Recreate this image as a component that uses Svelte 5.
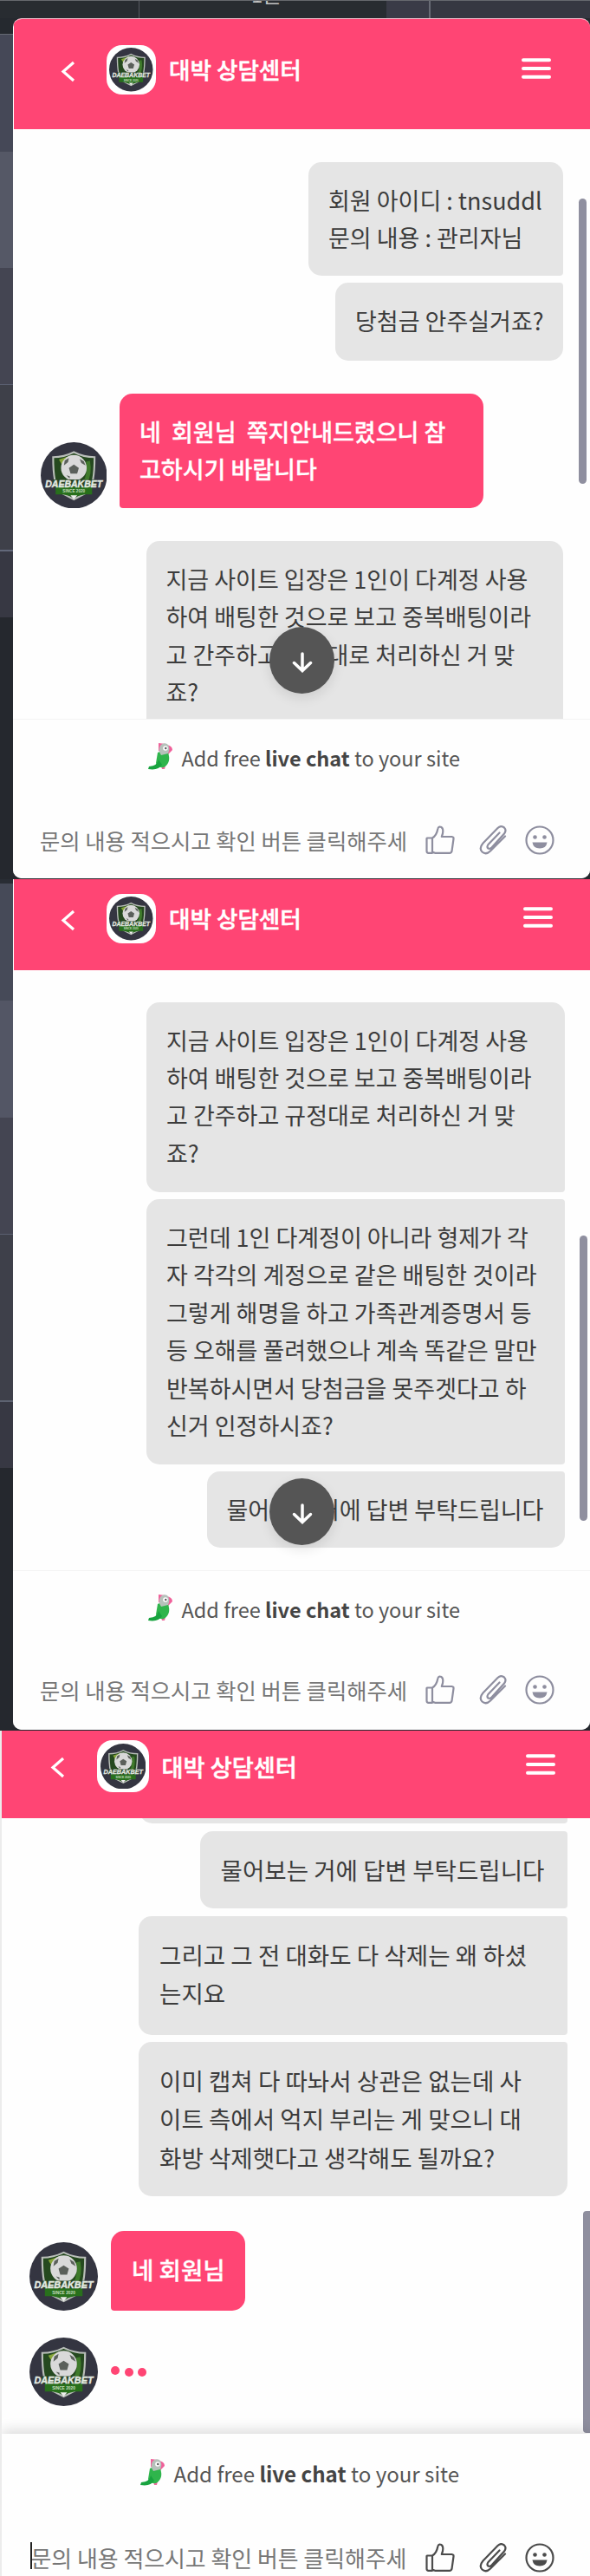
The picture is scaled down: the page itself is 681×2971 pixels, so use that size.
<script>
  const title = '대박 상담센터';
  const placeholder = '문의 내용 적으시고 확인 버튼 클릭해주세';

  const longQuestion =
    '지금 사이트 입장은 1인이 다계정 사용\n하여 배팅한 것으로 보고 중복배팅이라\n고 간주하고 규정대로 처리하신 거 맞\n죠?';

  // gap is the space above a message, h the height of its bubble
  const panels = [
    {
      name: 'first',
      scrollButton: true,
      messages: [
        { text: '회원 아이디 : tnsuddl\n문의 내용 : 관리자님', w: 294, h: 131, gap: 38.5, place: 'start' },
        { text: '당첨금 안주실거죠?', w: 263, h: 89.5, gap: 8, place: 'end' },
        { agent: true, text: '네  회원님  쪽지안내드렸으니 참\n고하시기 바랍니다', w: 420, h: 132, gap: 38.5 },
        { text: longQuestion, w: 481.5, h: 219, gap: 38, place: 'start' },
      ],
    },
    {
      name: 'second',
      scrollButton: true,
      messages: [
        { text: longQuestion, w: 482.5, h: 219.5, gap: 37, place: 'start' },
        {
          text: '그런데 1인 다계정이 아니라 형제가 각\n자 각각의 계정으로 같은 배팅한 것이라\n그렇게 해명을 하고 가족관계증명서 등\n등 오해를 풀려했으나 계속 똑같은 말만\n반복하시면서 당첨금을 못주겟다고 하\n신거 인정하시죠?',
          w: 482.5,
          h: 306,
          gap: 8,
          place: 'middle',
        },
        { text: '물어보는 거에 답변 부탁드립니다', w: 413, h: 87.5, gap: 8, place: 'end' },
      ],
    },
    {
      name: 'third',
      focused: true,
      messages: [
        { text: '', w: 494, h: 60, gap: -54, place: 'middle' },
        { text: '물어보는 거에 답변 부탁드립니다', w: 424, h: 89.5, gap: 8.5, place: 'middle' },
        { text: '그리고 그 전 대화도 다 삭제는 왜 하셨\n는지요', w: 494.5, h: 137, gap: 8.5, place: 'middle' },
        {
          text: '이미 캡쳐 다 따놔서 상관은 없는데 사\n이트 측에서 억지 부리는 게 맞으니 대\n화방 삭제햇다고 생각해도 될까요?',
          w: 494.5,
          h: 178,
          gap: 8.5,
          place: 'end',
        },
        { agent: true, text: '네 회원님', w: 155, h: 92.5, gap: 39.5 },
        { agent: true, typing: true, h: 79, gap: 31 },
      ],
    },
  ];
</script>

{#snippet logo()}
  <svg class="logo" viewBox="0 0 80 80">
    <circle cx="40" cy="40" r="40" fill="#343541" />
    <path d="M15 18q13 0 25-6q12 6 25 6q0 34-8 42l-17 9l-17-9q-8-8-8-42z" fill="#25491f" stroke="#b9beb9" stroke-width="2.2" />
    <path d="M22 21l15-5-9 15z" fill="#86a638" />
    <path d="M57 23q3 15-4 27" stroke="#3f7a2b" stroke-width="5" fill="none" />
    <circle cx="40" cy="31" r="15.5" fill="#d9d9d9" />
    <path d="M40 27l6 4-2 7h-8l-2-7zM29 22l5-3-1 5-5 4zM52 23l-5-3 2 5 5 3zM31 40l4 1v3z" fill="#5b605b" />
    <path d="M14 45h52v9h-52z" fill="#2a4526" />
    <path d="M18 54h44v9h-9l-13 3-13-3h-9z" fill="#28701c" />
    <path d="M36 64h8l-4 5z" fill="#eee" />
    <text x="40" y="54" text-anchor="middle" textLength="69" lengthAdjust="spacingAndGlyphs" class="logo-name">DAEBAKBET</text>
    <text x="40" y="61" text-anchor="middle" textLength="27" lengthAdjust="spacingAndGlyphs" class="logo-sub">SINCE 2020</text>
  </svg>
{/snippet}

<div class="page">
  {#each panels as panel}
    <section class="shot {panel.name}">
      {#if panel.name === 'first'}
        <div class="backdrop"><span>1은</span></div>
      {/if}
      <div class="chat">
        <header>
          <svg class="back" viewBox="0 0 17 25"><path d="M15 2L3 12.5L15 23" /></svg>
          <div class="brand">{@render logo()}</div>
          <h1>{title}</h1>
          <svg class="menu" viewBox="0 0 34 24"><path d="M2 2.2h30M2 12h30M2 21.8h30" /></svg>
        </header>

        <div class="messages">
          {#each panel.messages as m}
            <div class="row" class:agent={m.agent} style="margin-top: {m.gap}px; height: {m.h}px">
              {#if m.agent}
                <div class="avatar">{@render logo()}</div>
              {/if}
              {#if m.typing}
                <div class="typing"><i></i><i></i><i></i></div>
              {:else}
                <div class="bubble {m.place ?? ''}" style="width: {m.w}px">{m.text}</div>
              {/if}
            </div>
          {/each}
          <div class="thumb"></div>
          {#if panel.scrollButton}
            <div class="scroll-down">
              <svg viewBox="0 0 24 24"><path d="M12 2v19M2.5 12.5L12 21.5L21.5 12.5" /></svg>
            </div>
          {/if}
        </div>

        <footer>
          <div class="promo">
            <svg class="parrot" viewBox="0 0 29 32">
              <path d="M12 1l8 1-3 10-5-2zM21 3q7 1 7 6l-5 5-3-4z" fill="#f0609a" />
              <path d="M15 27h5l-1 4h-3z" fill="#ef6a9f" />
              <path d="M11 12q4-3 12 0q4 12-5 17q-7 1-9-5z" fill="#2fb54c" />
              <path d="M12 20q-1 7-11 8l-1 3q12 2 16-5z" fill="#18a33f" />
              <path d="M14 4q3-4 8-2q4 4 1 11l-8 2q-4-5-1-11z" fill="#b5c1ba" />
              <circle cx="20" cy="7" r="2.8" fill="#fff" />
              <circle cx="20.3" cy="7" r="1.2" fill="#555" />
            </svg>
            <p>Add free <b>live chat</b> to your site</p>
          </div>
          <div class="entry">
            {#if panel.focused}<span class="caret"></span>{/if}
            <span class="hint">{placeholder}</span>
            <svg class="icon" viewBox="0 0 34 34">
              <path d="M2 14.5h6v17.3H3.6Q1.5 31.8 1.5 29.5V15zM8 14.5q5-3 6.3-10.5q.3-2 2-2.5q4 0 4 5q0 3-1.5 6.5h11.7q2.3.3 2 2.5l-2 14.3q-.5 2-2.5 2H11L8 30.5" />
            </svg>
            <svg class="icon clip" viewBox="0 0 34 34">
              <path d="M24.5 8.5L11.5 22q-2 3 0 4.5q2 1 4-1L30 9.5q3-4 0-7q-4-3-7.5.5L5.5 20.5q-5 6-1 10q4.5 4 9.5-1L31 12.5" />
            </svg>
            <svg class="icon smile" viewBox="0 0 34 34">
              <circle cx="17" cy="17" r="15.5" />
              <circle class="fill" cx="11.5" cy="13.5" r="2.3" />
              <circle class="fill" cx="22.5" cy="13.5" r="2.3" />
              <path class="fill" d="M8.5 19.5h17q-1 7-8.5 7t-8.5-7z" />
            </svg>
          </div>
        </footer>
      </div>
    </section>
  {/each}
</div>

<style>
  :global(body) {
    margin: 0;
  }

  .page {
    width: 681px;
    height: 2971px;
    overflow: hidden;
    font-family: 'Noto Sans CJK KR', 'Noto Sans', sans-serif;
    color: #3c3c3c;
    background: #25282e;
  }

  .shot {
    box-sizing: border-box;
    padding-left: 15px;
    overflow: hidden;
  }

  .first {
    height: 1014px;
    background: linear-gradient(
      #25292f 0 39px, #666a73 39px 40px, #454857 40px 175px, #555866 175px 309px,
      #444552 309px 443px, #5a5f70 443px 444px, #3e4049 444px 634px, #62687a 634px 636px,
      #373843 636px 712px, #25282e 712px
    );
  }

  .second {
    height: 982px;
    background: linear-gradient(
      #292d34 0 5px, #464a58 5px 140px, #535665 140px 275px, #444552 275px 409px,
      #5a5f70 409px 410px, #3e404a 410px 601px, #5d6271 601px 603px, #373843 603px 679px,
      #25282e 679px
    );
  }

  .third {
    height: 975px;
    padding-left: 2px;
    background: #ececec;
  }

  .backdrop {
    height: 21px;
    margin-left: -15px;
    box-sizing: border-box;
    border-top: 1px solid #66696e;
    overflow: hidden;
    background: linear-gradient(
      90deg, #282c31 0 160px, #565960 160px 161px, #282c31 161px 446px,
      #3a3b47 446px 495px, #686b75 495px 497px, #363842 497px
    );
  }

  .backdrop span {
    display: block;
    margin: -23px 0 0 290px;
    font-size: 24px;
    line-height: 30px;
    color: #c5c5c5;
  }

  .chat {
    display: flex;
    flex-direction: column;
    height: 100%;
    background: #fefefe;
    overflow: hidden;
  }

  .first .chat {
    height: 992px;
    border-radius: 10px;
    border-top: 1px solid #f7c3d0;
    box-sizing: border-box;
  }

  .second .chat {
    height: 981px;
    border-radius: 0 0 10px 10px;
  }

  header {
    display: flex;
    align-items: flex-start;
    flex: none;
    height: 104.5px;
    margin-left: 1px;
    box-sizing: border-box;
    background: #ff4574;
  }

  .first header {
    height: 126.5px;
    padding-top: 13px;
  }

  .third header {
    height: 101px;
    margin-left: 0;
  }

  .back {
    width: 17px;
    height: 25px;
    margin: 34.5px 0 0 53.5px;
    fill: none;
    stroke: #fff;
    stroke-width: 3.2;
  }

  .brand {
    width: 57.5px;
    height: 57.5px;
    margin: 16.5px 0 0 36px;
    padding: 3.5px;
    box-sizing: border-box;
    border-radius: 18px;
    background: #fff;
  }

  .logo {
    display: block;
    width: 100%;
    height: 100%;
  }

  .logo-name {
    font: italic bold 11px 'Liberation Sans', sans-serif;
    fill: #e4ebe2;
    stroke: #e4ebe2;
    stroke-width: 0.4;
  }

  .logo-sub {
    font: bold 5px 'Liberation Sans', sans-serif;
    fill: #c7dfc0;
  }

  h1 {
    margin: 25px 0 0 15px;
    font-size: 26.6px;
    line-height: 40px;
    font-weight: 500;
    white-space: nowrap;
    color: #fff;
    -webkit-text-stroke: 0.5px #fff;
  }

  .menu {
    width: 34px;
    height: 24px;
    margin: 31.5px 43px 0 auto;
    fill: none;
    stroke: #fff;
    stroke-width: 4;
    stroke-linecap: round;
  }

  .first .menu {
    margin-right: 45px;
  }

  .third .back {
    margin: 29.5px 0 0 55.5px;
  }

  .third .brand {
    width: 59.5px;
    height: 59.5px;
    margin: 11px 0 0 37.5px;
  }

  .third h1 {
    margin-top: 21px;
    font-size: 27.2px;
  }

  .third .menu {
    margin: 27px 40.5px 0 auto;
  }

  .messages {
    position: relative;
    flex: 1;
    min-height: 0;
    padding: 0 29.5px 0 31.5px;
    overflow: hidden;
    display: flow-root;
  }

  .first .messages {
    padding-right: 31px;
  }

  .third .messages {
    padding: 0 26.5px 0 32px;
  }

  .row {
    display: flex;
    justify-content: flex-end;
    align-items: stretch;
  }

  .row.agent {
    justify-content: flex-start;
    align-items: flex-end;
    gap: 15px;
  }

  .bubble {
    box-sizing: border-box;
    padding: 22px 0 0 23px;
    font-size: 27px;
    line-height: 43.4px;
    white-space: pre;
    background: #e5e5e5;
    border-radius: 15px 4px 4px 15px;
  }

  .bubble.start {
    border-radius: 15px 15px 4px 15px;
  }

  .bubble.end {
    border-radius: 15px 4px 15px 15px;
  }

  .agent .bubble {
    height: 100%;
    color: #fff;
    font-weight: 500;
    -webkit-text-stroke: 0.3px #fff;
    background: #ff4574;
    border-radius: 15px 15px 15px 4px;
  }

  .third .bubble {
    padding-left: 24px;
    font-size: 27.6px;
    line-height: 44.4px;
  }

  .avatar {
    width: 76.5px;
    height: 76.5px;
  }

  .third .avatar {
    width: 79px;
    height: 79px;
  }

  .typing {
    display: flex;
    align-self: center;
    gap: 5.5px;
  }

  .typing i {
    width: 10px;
    height: 10px;
    border-radius: 50%;
    background: #ff4574;
  }

  .typing i:first-child {
    transform: translateY(-2px);
  }

  .thumb {
    position: absolute;
    right: 3px;
    top: 306px;
    width: 9px;
    height: 329px;
    border-radius: 5px;
    background: #8f8f9f;
  }

  .first .thumb {
    right: 4.5px;
    top: 80px;
    height: 329px;
  }

  .third .thumb {
    right: 0;
    top: 453px;
    width: 8px;
    height: 256px;
    border-radius: 4px 0 0 4px;
  }

  .scroll-down {
    position: absolute;
    left: 296px;
    bottom: 29px;
    display: grid;
    place-items: center;
    width: 75px;
    height: 77px;
    border-radius: 50%;
    background: #555;
    box-shadow: 0 5px 14px rgba(0, 0, 0, 0.1);
  }

  .scroll-down svg {
    width: 24px;
    height: 24px;
    margin-top: 5px;
    fill: none;
    stroke: #fff;
    stroke-width: 3.5;
    stroke-linecap: round;
  }

  footer {
    position: relative;
    flex: none;
    height: 184px;
    box-sizing: border-box;
    border-top: 1px solid #f3f3f3;
    background: #fefefe;
  }

  .third footer {
    height: 164px;
    box-shadow: 0 -4px 14px rgba(0, 0, 0, 0.14);
    border-top: 0;
  }

  .promo {
    display: flex;
    align-items: flex-start;
    padding: 26px 0 0 156px;
    height: 70px;
    box-sizing: border-box;
  }

  .parrot {
    width: 29px;
    height: 32px;
    margin-right: 9.5px;
  }

  .promo p {
    margin: 1px 0 0;
    font-size: 23.5px;
    line-height: 34px;
    white-space: nowrap;
    color: #555;
  }

  .promo b {
    color: #444;
  }

  .third .promo {
    padding: 28px 0 0 160px;
    height: 72px;
  }

  .third .promo p {
    font-size: 24.1px;
  }

  .entry {
    display: flex;
    align-items: center;
    height: 66px;
    margin-top: 36px;
    margin-left: 31px;
  }

  .second .entry {
    margin-top: 34px;
  }

  .hint {
    width: 444.5px;
    font-size: 25.3px;
    line-height: 40px;
    white-space: nowrap;
    color: #777;
  }

  .icon {
    width: 34px;
    height: 34px;
    margin-right: 27px;
    fill: none;
    stroke: #8e8e9f;
    stroke-width: 2.2;
    stroke-linejoin: round;
    stroke-linecap: round;
  }

  .clip {
    margin-right: 20px;
  }

  .smile {
    margin-right: 0;
  }

  .icon .fill {
    fill: #8e8e9f;
    stroke: none;
  }

  .third .entry {
    position: relative;
    margin-top: 38px;
    margin-left: 33.5px;
    height: 66px;
  }

  .third .hint {
    width: 455px;
    font-size: 25.9px;
  }

  .third .icon {
    stroke: #4b4b4b;
  }

  .third .icon .fill {
    fill: #4b4b4b;
  }

  .caret {
    position: absolute;
    left: -1px;
    top: 15px;
    width: 2px;
    height: 31px;
    background: #222;
  }
</style>
